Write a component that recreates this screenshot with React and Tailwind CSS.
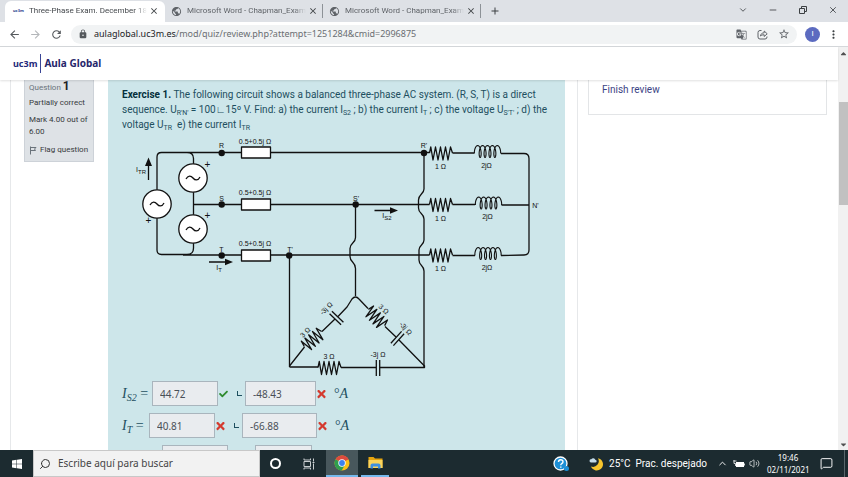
import React from 'react';
import {
    MdPublic, MdArrowBack, MdArrowForward, MdRefresh, MdLock, MdGTranslate,
    MdStarBorder, MdMoreVert, MdClose, MdAdd,
} from 'react-icons/md';
import { FaCheck, FaTimes, FaCaretUp, FaCaretDown } from 'react-icons/fa';
import { ChevronDown, ChevronUp, Minus, X, Search, Volume2, MessageSquare } from 'lucide-react';

const tabs = [
    { title: 'Three-Phase Exam. December 18', active: true },
    { title: 'Microsoft Word - Chapman_Exam', active: false },
    { title: 'Microsoft Word - Chapman_Exam', active: false },
];

const Tab = ({ title, active }) => (
    <div
        className={
            active
                ? 'flex h-[21px] w-[160px] items-center rounded-t-md bg-white pr-[6px] pl-2'
                : 'flex h-[14px] w-[158px] items-center border-r border-[#8d9297] pr-[4px] pl-[6px]'
        }
    >
        {active ? (
            <span className="w-[10px] shrink-0 text-center text-[4px] font-bold text-[#2a3a8c]">uc3m</span>
        ) : (
            <MdPublic className="h-[11px] w-[11px] shrink-0 text-[#5f6368]" />
        )}
        <span
            className={
                active
                    ? "ml-[6px] min-w-0 flex-1 mask-r-from-90% font-['Roboto',sans-serif] text-[8px] whitespace-nowrap text-[#45494d]"
                    : "ml-[5px] min-w-0 flex-1 mask-r-from-90% font-['Roboto',sans-serif] text-[8px] whitespace-nowrap text-[#5f6368]"
            }
        >
            {title}
        </span>
        <button type="button" aria-label="Close tab" className="ml-[2px] text-[#3c4043]">
            <MdClose className="h-[10px] w-[10px]" />
        </button>
    </div>
);

const TabStrip = () => (
    <div className="flex h-[22px] shrink-0 items-center bg-[#dee1e6] pl-[5px]">
        <div className="flex h-full items-center self-end">
            {tabs.map((tab, i) => (
                <Tab key={i} {...tab} />
            ))}
        </div>
        <button type="button" aria-label="New tab" className="ml-[8px] text-[#3c4043]">
            <MdAdd className="h-3 w-3" />
        </button>
        <div className="mr-[10px] mb-[3px] ml-auto flex items-center gap-5 text-[#3c4043]">
            <button type="button" aria-label="Search tabs"><ChevronDown className="h-[10px] w-[10px]" strokeWidth={2} /></button>
            <button type="button" aria-label="Minimize"><Minus className="h-[10px] w-[10px]" strokeWidth={2} /></button>
            <button type="button" aria-label="Restore">
                <svg viewBox="0 0 10 10" className="h-[10px] w-[10px]" fill="none" stroke="currentColor" strokeWidth="1">
                    <path d="M1.5 3.5h5v5h-5zM3.5 3.5v-2h5v5h-2" />
                </svg>
            </button>
            <button type="button" aria-label="Close"><X className="h-[10px] w-[10px]" strokeWidth={2} /></button>
        </div>
    </div>
);

const Toolbar = () => (
    <div className="flex h-[25px] shrink-0 items-center border-b border-[#d5d8db] bg-white pr-2 pl-[8px]">
        <button type="button" aria-label="Back"><MdArrowBack className="h-[13px] w-[13px] text-[#55595d]" /></button>
        <button type="button" aria-label="Forward" className="ml-[8px]"><MdArrowForward className="h-[13px] w-[13px] text-[#b4b7ba]" /></button>
        <button type="button" aria-label="Reload" className="ml-[8px]"><MdRefresh className="h-[13px] w-[13px] text-[#55595d]" /></button>
        <div className="ml-[8px] flex h-[19px] flex-1 items-center rounded-full bg-[#f1f3f4] px-[7px]">
            <MdLock className="h-[10px] w-[10px] text-[#55595d]" />
            <div className="ml-[6px] flex-1 text-[9px] whitespace-nowrap text-[#6a6e72]">
                <span className="text-[#202124]">aulaglobal.uc3m.es</span>/mod/quiz/review.php?attempt=1251284&amp;cmid=2996875
            </div>
            <div className="flex items-center gap-[10px] text-[#5f6368]">
                <MdGTranslate className="h-[11px] w-[11px]" />
                <svg viewBox="0 0 11 11" className="h-[11px] w-[11px]" fill="none" stroke="currentColor" strokeWidth="1">
                    <path d="M4.5 1.5H3a2 2 0 0 0-2 2V8a2 2 0 0 0 2 2h5a2 2 0 0 0 2-2v-.5" />
                    <path d="M3.5 7c.2-2 1.500-3.200 3.700-3.200V2l3 2.800-3 2.700V5.800C5.500 5.800 4.300 6 3.500 7z" />
                </svg>
                <MdStarBorder className="h-3 w-3" />
            </div>
        </div>
        <div className="ml-2 flex h-[15px] w-[15px] items-center justify-center rounded-full bg-[#5c6bc0] font-['Roboto',sans-serif] text-[8px] text-white">I</div>
        <button type="button" aria-label="Menu" className="ml-[7px]"><MdMoreVert className="h-[13px] w-[13px] text-[#3c4043]" /></button>
    </div>
);

const SiteHeader = () => (
    <header className="z-10 flex h-[33px] shrink-0 items-center bg-white pl-[13px] shadow-[0_1px_2px_rgba(0,0,0,0.12)]">
        <a href="#" className="flex items-center text-[#1f2a7a]">
            <span className="text-[9px] font-bold">uc3m</span>
            <span className="mx-[3px] h-[19px] w-px bg-[#3a4596]" />
            <span className="text-[10px] font-bold text-[#27276b]">Aula Global</span>
        </a>
    </header>
);

const QuestionInfo = () => (
    <div className="h-[82px] w-[70px] shrink-0 border border-t-0 border-[#cdd2d8] bg-[#dee2e6] pl-[4px] font-['Roboto',sans-serif] text-[8px] text-[#373a3c]">
        <h3 className="leading-[13px] whitespace-nowrap text-[#6a737b]">
            Question <span className="text-[12px] font-bold text-[#1d2125]">1</span>
        </h3>
        <p className="mt-[3px] leading-[12px] whitespace-nowrap">Partially correct</p>
        <p className="mt-[5px] leading-[12px] whitespace-nowrap">Mark 4.00 out of<br />6.00</p>
        <a href="#" className="mt-[6px] flex items-center gap-[3px] leading-[12px] whitespace-nowrap">
            <svg viewBox="0 0 8 9" className="h-[9px] w-[8px]" fill="none" stroke="#6a737b" strokeWidth="1">
                <path d="M1.500 .5v8M1.500 1.500h5.500l-1.500 1.500 1 1.500h-5" />
            </svg>
            Flag question
        </a>
    </div>
);

// Zigzag resistor, 23 wide, centred on 0,0
const Resistor = ({ at, rotate = 0 }) => (
    <path
        transform={`translate(${at}) rotate(${rotate})`}
        d="M-11.500 0L-10.200 -6L-8 7L-5.500 -6L-3 7L-.5 -6L2 7L4.500 -6L7 7L9.500 -6L11.500 0"
    />
);

const Capacitor = ({ at, rotate = 0 }) => (
    <path transform={`translate(${at}) rotate(${rotate})`} d="M-1.700 -8V8M1.700 -8V8" />
);

// Five turns; the curve loops back on itself at the bottom of each one
const coilPath = Array.from({ length: 109 }, (_, i) => {
    const t = -Math.PI / 2 + (i / 108) * 9 * Math.PI;
    const x = 0.78 * (t - 4 * Math.PI) + 2.1 * Math.sin(t);
    const y = -2 - 6 * Math.cos(t);
    return `${i ? 'L' : 'M'}${x.toFixed(2)} ${y.toFixed(2)}`;
}).join('');

const Coil = ({ at }) => (
    <path transform={`translate(${at})`} strokeWidth="1.100" d={`M-13.100 0V-2${coilPath.replace('M', 'L')}V0`} />
);

const Source = ({ x, y }) => (
    <g>
        <circle cx={x} cy={y} r="14.200" fill="#fff" />
        <path d={`M${x - 7} ${y + 1}c2-4 5-3.500 7-1s5 3 7-1`} />
    </g>
);

const Circuit = () => (
    <svg viewBox="130 136 414 243" className="mt-[4px] ml-[8px] block h-[243px] w-[414px]" role="img" aria-label="Three-phase circuit">
        <g fill="none" stroke="#111" strokeWidth="1.300" strokeLinejoin="round">
            {/* sources */}
            <path d="M157 190V157q0-4.500 4.500-4.500H429.500M187 152.500q6.500 0 6.500 6V248M157 218v32q0 4.500 4.500 4.500H187q6.500 0 6.500-6.500M193.500 204.500H429.500M183 255H429.500" />
            <Source x={157} y={204} />
            <Source x={193} y={178} />
            <Source x={193} y={229} />
            <g fill="#fff">
                <rect x="241.500" y="147" width="29" height="11" />
                <rect x="241.500" y="199" width="29" height="11" />
                <rect x="241.500" y="250" width="29" height="11" />
            </g>
            {/* star load */}
            <Resistor at="441 153" />
            <Resistor at="441 204.500" />
            <Resistor at="441 255" />
            <path d="M452.500 153H474M452.500 204.500H475M452.500 255.500H475" />
            <Coil at="487.500 153.500" />
            <Coil at="488.500 205" />
            <Coil at="488 255.500" />
            <path d="M501 153.500h23q5 0 5 5V250q0 5-5 5l-23 .5M501.500 205H529" />
            {/* drops to the delta */}
            <path d="M424 153v36c0 5-5.500 5-5.500 11v8c0 6 5.500 5 5.500 11v21c0 5-5 5-5 10v10c0 6 5 5 5 11v96" />
            <path d="M355.500 204.500v33c0 6-5.500 5-5.500 11v8c0 6 5.500 5 5.500 12V296M289.500 255v112" />
            <path d="M289.500 367H318M341 367.500H376M380 367.500h44.500v-2" />
            <path d="M289.500 366l15-19M322 331.500L335 319M338 316.500l9-9.500 5-8q3.500-4 7 0l9 9.500M385 326.500l11 10.500M399 340l25.500 26" />
            <Resistor at="329.500 367.500" />
            <Resistor at="313 339" rotate={-41} />
            <Resistor at="376.500 317.500" rotate={45} />
            <Capacitor at="378 368" />
            <Capacitor at="336.500 318" rotate={-46} />
            <Capacitor at="397.500 338.500" rotate={-138} />
            <path d="M148.500 180v-16M209 262h18M374.500 210.500H392" />
        </g>
        <g fill="#111">
            <path d="M148.500 157.500l-3.500 8.500h7zM233 262l-8-3.300v6.600zM398 210.500l-8-3.300v6.600z" />
            <circle cx="221.700" cy="153" r="3.200" />
            <circle cx="221.700" cy="204.500" r="3.200" />
            <circle cx="221.700" cy="255.500" r="3.200" />
            <circle cx="289.200" cy="255.500" r="3.200" />
            <circle cx="355.700" cy="204.500" r="3.200" />
            <circle cx="424" cy="153" r="3.200" />
        </g>
        <g fill="#111" fontSize="7" textAnchor="middle" className="font-['Liberation_Sans']">
            <text x="221.500" y="148">R</text>
            <text x="221.500" y="201">S</text>
            <text x="221.500" y="252">T</text>
            <text x="290" y="252">T'</text>
            <text x="356" y="201">S'</text>
            <text x="424" y="148">R'</text>
            <text x="535.500" y="208">N'</text>
            <text x="255" y="144">0.5+0.5j Ω</text>
            <text x="255" y="195">0.5+0.5j Ω</text>
            <text x="255" y="246">0.5+0.5j Ω</text>
            <text x="440.500" y="169">1 Ω</text>
            <text x="440.500" y="221">1 Ω</text>
            <text x="440.500" y="271">1 Ω</text>
            <text x="486.500" y="168">2jΩ</text>
            <text x="487.500" y="219">2jΩ</text>
            <text x="487" y="270">2jΩ</text>
            <text x="329" y="359">3 Ω</text>
            <text x="378" y="357">-3j Ω</text>
            <text transform="translate(307 334) rotate(-45)">3 Ω</text>
            <text transform="translate(328 310) rotate(-45)">-3j Ω</text>
            <text transform="translate(382 311) rotate(42)">3 Ω</text>
            <text transform="translate(404 330) rotate(48)">-3j Ω</text>
            <text x="141" y="172">I<tspan fontSize="6" dy="2">TR</tspan></text>
            <text x="219" y="270">I<tspan fontSize="6" dy="2">T</tspan></text>
            <text x="387" y="218">I<tspan fontSize="6" dy="2">S2</tspan></text>
            <text x="207.500" y="168" fontSize="10">+</text>
            <text x="207.500" y="219" fontSize="10">+</text>
            <text x="148.500" y="224" fontSize="10">+</text>
        </g>
    </svg>
);

const Mark = ({ ok }) =>
    ok ? (
        <FaCheck className="ml-px h-[10px] w-[9px] text-[#2e8b2e]" />
    ) : (
        <FaTimes className="ml-px h-[12px] w-[9px] text-[#d43a2f]" />
    );

const inputClass = 'h-[25px] border border-[#a9b5bd] bg-[#e9ecef] pl-[7px] text-[10px] text-[#495057] outline-none';

const AnswerRow = ({ label, name, sub, labelClass, current, currentOk, angle, angleClass, angleOk }) => (
    <div className="flex h-[25px] items-center">
        <div className={`shrink-0 whitespace-nowrap font-['Liberation_Serif',serif] text-[14px] text-[#1d4f5f] ${labelClass}`}>
            {label && <><i>{label}<sub className="text-[10px]">{sub}</sub></i> =</>}
        </div>
        <input type="text" readOnly aria-label={`${name} magnitude`} defaultValue={current} className={`${inputClass} w-[66px]`} />
        <Mark ok={currentOk} />
        <span className="mr-[3px] ml-[9px] h-[5px] w-[5px] border-b border-l border-[#1d4f5f]" />
        <input type="text" readOnly aria-label={`${name} angle`} defaultValue={angle} className={`${inputClass} ${angleClass}`} />
        <Mark ok={angleOk} />
        {label && <span className="ml-[8px] font-['Liberation_Serif',serif] text-[14px] text-[#1d4f5f]">°<i>A</i></span>}
    </div>
);

const Sub = ({ children }) => <sub className="text-[7px]">{children}</sub>;

const Exercise = () => (
    <div className="ml-[14px] min-w-0 flex-1 overflow-hidden bg-[#cde6ea] pt-[7px] pl-[14px] text-[#1d4f5f]">
        <p className="font-['Roboto',sans-serif] text-[10px] leading-[15px] whitespace-nowrap">
            <b className="text-[#04303c]">Exercise 1.</b> The following circuit shows a balanced three-phase AC system. (R, S, T) is a direct<br />
            sequence. U<Sub>R'N'</Sub> = 100∟15º V. Find: a) the current I<Sub>S2</Sub> ; b) the current I<Sub>T</Sub> ; c) the voltage U<Sub>S'T'</Sub> ; d) the<br />
            voltage U<Sub>TR</Sub>&nbsp; e) the current I<Sub>TR</Sub>
        </p>
        <Circuit />
        <div className="mt-[2px] flex flex-col gap-[7px]">
            <AnswerRow label="I" name="IS2" sub="S2" labelClass="w-[30px]" current="44.72" currentOk angle="-48.43" angleClass="w-[71px]" />
            <AnswerRow label="I" name="IT" sub="T" labelClass="w-[27px]" current="40.81" angle="-66.88" angleClass="w-[75px]" />
            <AnswerRow name="US'T'" labelClass="w-[40px]" current="" angle="" angleClass="w-[57px]" />
        </div>
    </div>
);

const ScrollBar = () => (
    <div className="flex w-[10px] shrink-0 flex-col items-center bg-[#f1f1f1] text-[#505050]">
        <FaCaretUp className="mt-[2px] h-[9px] w-[9px]" />
        <div className="mt-[44px] h-[103px] w-[9px] bg-[#c1c1c1]" />
        <FaCaretDown className="mt-auto mb-px h-[9px] w-[9px]" />
    </div>
);

const ChromeLogo = () => (
    <svg viewBox="0 0 16 16" className="h-4 w-4">
        <circle cx="8" cy="8" r="7.500" fill="#fbc116" />
        <path d="M8 8L1.500 4.250A7.500 7.500 0 0 1 14.500 4.250z" fill="#dd4b3e" />
        <path d="M8 4.500h6.600A7.500 7.500 0 0 0 8 .5z" fill="#dd4b3e" />
        <path d="M1.500 4.250A7.500 7.500 0 0 0 7.700 15.500L11 9.700 8 8z" fill="#2f9e4f" />
        <circle cx="8" cy="8" r="3.700" fill="#fff" />
        <circle cx="8" cy="8" r="2.900" fill="#3b82f0" />
    </svg>
);

const Taskbar = () => (
    <footer className="flex h-[27px] shrink-0 items-center bg-[#1c2b30] text-white">
        <button type="button" aria-label="Start" className="flex w-[33px] items-center justify-center">
            <svg viewBox="0 0 10 10" className="h-[10px] w-[10px]" fill="#fff">
                <path d="M0 1.400L4.500.8v3.900H0zM5 .7L10 0v4.700H5zM0 5.300h4.500v3.900L0 8.600zM5 5.300h5V10l-5-.7z" />
            </svg>
        </button>
        <label className="flex h-full w-[227px] items-center border border-[#c8c8c8] bg-[#f2f2f2] pl-[5px] text-[#333]">
            <Search className="h-[12px] w-[12px] shrink-0 -scale-x-100" strokeWidth={2} />
            <input
                type="text"
                aria-label="Buscar"
                placeholder="Escribe aquí para buscar"
                className="ml-[7px] w-full bg-transparent text-[10px] outline-none placeholder:text-[#444]"
            />
        </label>
        <button type="button" aria-label="Cortana" className="flex w-[31px] justify-center">
            <span className="h-[11px] w-[11px] rounded-full border-2 border-white" />
        </button>
        <button type="button" aria-label="Task view" className="flex w-[35px] justify-center">
            <svg viewBox="0 0 12 12" className="h-3 w-3" fill="none" stroke="#c9ced0" strokeWidth="1">
                <path d="M1 .5v1.500h6.500V.5M1 11.500V10h6.500v1.500M1 3.500h6.500v5H1zM10.500 .5v3M10.500 5.500v6M9.500 4.500h2" />
            </svg>
        </button>
        <button type="button" aria-label="Chrome" className="flex h-full w-[32px] items-center justify-center border-b-2 border-[#76b9ed] bg-[#48575c]">
            <ChromeLogo />
        </button>
        <button type="button" aria-label="File explorer" className="ml-[3px] flex h-full w-[28px] items-center justify-center border-b-2 border-[#76b9ed]">
            <svg viewBox="0 0 15 13" className="h-[13px] w-[15px]">
                <path d="M.5 1h5l1.500 1.500h7.500V12H.5z" fill="#e5a50f" />
                <path d="M.5 4h14v8H.5z" fill="#fbd45c" />
                <path d="M2.500 12.500v-3q0-2 2-2h6q2 0 2 2v3h-2.500v-2H5v2z" fill="#3f8fe0" />
            </svg>
        </button>
        <div className="ml-auto flex h-full items-center">
            <svg viewBox="0 0 16 16" className="h-4 w-4">
                <circle cx="7.500" cy="7.500" r="6.500" fill="#1d8fd6" stroke="#fff" strokeWidth="1.300" />
                <path d="M5.500 6q0-2.200 2.200-2.200T10 5.700q0 1.200-1.200 1.800-1 .6-1 1.700M7.800 10.500v1.300" fill="none" stroke="#fff" strokeWidth="1.400" />
                <circle cx="13.500" cy="12.500" r="2.500" fill="#1d8fd6" />
            </svg>
            <svg viewBox="0 0 14 14" className="ml-[20px] h-[14px] w-[14px]">
                <path d="M9 1.200A6.200 6.200 0 1 1 2 9.500 5.800 5.800 0 0 0 9 1.200z" fill="#f7c52d" />
                <path d="M2 5.500a1.600 1.600 0 0 1 .3-3.200 2.200 2.200 0 0 1 4 .4 1.400 1.400 0 0 1-.1 2.800z" fill="#c5dcea" />
            </svg>
            <span className="ml-[6px] font-['Roboto',sans-serif] text-[10px] whitespace-nowrap">25°C</span>
            <span className="ml-[5px] font-['Roboto',sans-serif] text-[10px] whitespace-nowrap">Prac. despejado</span>
            <ChevronUp className="ml-[10px] h-[11px] w-[11px]" strokeWidth={2} />
            <svg viewBox="0 0 12 8" className="ml-[5px] h-2 w-3">
                <path d="M3 2h8v5H3z" fill="#fff" />
                <path d="M11.500 3.500v2M.5 1h3M1 0v3.500h1.500V6" fill="none" stroke="#fff" strokeWidth=".8" />
            </svg>
            <Volume2 className="ml-[4px] h-[11px] w-[11px]" strokeWidth={1.5} />
            <div className="ml-[7px] w-[42px] text-center text-[8px] leading-[12px] whitespace-nowrap">
                19:46<br />02/11/2021
            </div>
            <MessageSquare className="ml-[11px] h-[13px] w-[13px]" strokeWidth={1.75} />
            <span className="ml-[11px] h-full w-px bg-[#59666b]" />
            <span className="w-[3px]" />
        </div>
    </footer>
);

const App = () => (
    <div className="flex h-screen flex-col overflow-hidden bg-white font-['Noto_Sans',sans-serif]">
        <TabStrip />
        <Toolbar />
        <div className="flex min-h-0 flex-1">
            <div className="flex min-w-0 flex-1 flex-col">
                <SiteHeader />
                <main className="flex min-h-0 flex-1 items-stretch">
                    <section className="ml-[10px] flex min-w-0 flex-1 items-stretch border-x border-[#e6e8ea] pr-[12px] pl-[13px]">
                        <QuestionInfo />
                        <Exercise />
                    </section>
                    <aside className="mr-[11px] ml-[10px] h-[35px] w-[239px] shrink-0 border border-t-0 border-[#e3e5e7] pt-[2px] pl-[13px]">
                        <a href="#" className="block font-['Roboto',sans-serif] text-[10px] leading-[15px] text-[#3b4384]">Finish review</a>
                    </aside>
                </main>
            </div>
            <ScrollBar />
        </div>
        <Taskbar />
    </div>
);

export default App;
